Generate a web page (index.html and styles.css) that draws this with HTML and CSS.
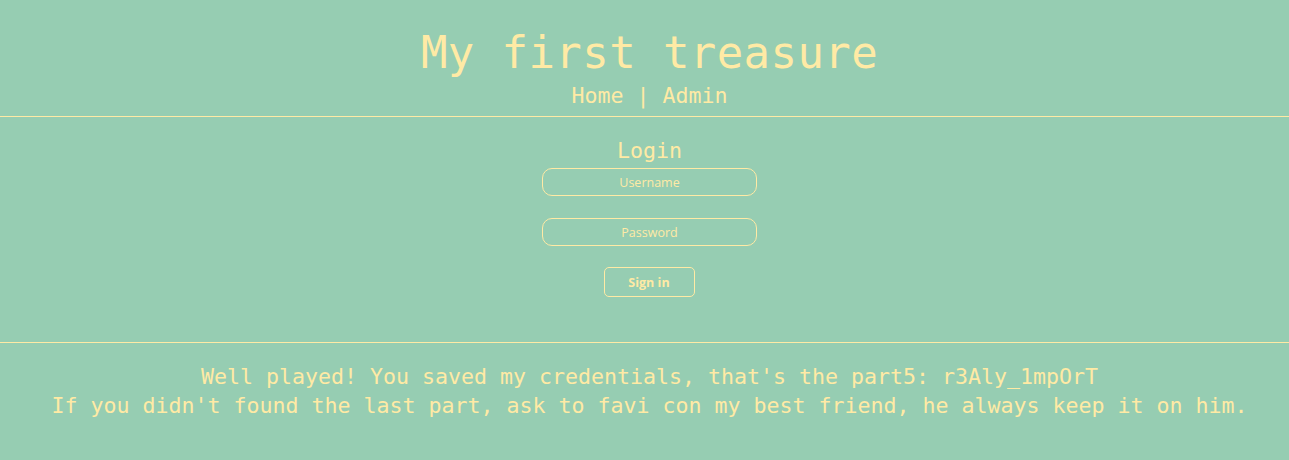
FILE: index.html
```html
<!DOCTYPE html>
<html lang="en">
<head>
<meta charset="utf-8">
<title>My first treasure</title>
<link rel="stylesheet" href="styles.css">
</head>
<body>
<header class="top">
  <h1 class="title">My first treasure</h1>
  <nav class="nav"><a href="#" class="nav-link">Home</a> | <a href="#" class="nav-link">Admin</a></nav>
</header>
<main class="login">
  <h2 class="login-title">Login</h2>
  <form class="login-form">
    <input class="field" type="text" placeholder="Username">
    <input class="field" type="password" placeholder="Password">
    <button class="btn" type="button">Sign in</button>
  </form>
</main>
<footer class="message">
  <p class="msg-line">Well played! You saved my credentials, that's the part5: r3Aly_1mpOrT</p>
  <p class="msg-line">If you didn't found the last part, ask to favi con my best friend, he always keep it on him.</p>
</footer>
</body>
</html>
```
FILE: styles.css
```css
html, body {
  margin: 0;
  padding: 0;
}
body {
  background: #96cdb2;
  color: #ffeaa5;
  font-family: "DejaVu Sans Mono", "Liberation Mono", monospace;
  height: 460px;
  overflow: hidden;
}
.top {
  padding: 27px 0 7px 10px;
  text-align: center;
  border-bottom: 1px solid #ffeaa5;
}
.title {
  margin: 0;
  font-size: 44px;
  line-height: 52px;
  font-weight: normal;
  letter-spacing: 0.4px;
}
.nav {
  margin-top: 4px;
  font-size: 21.6px;
  line-height: 26px;
}
.nav-link {
  color: #ffeaa5;
  text-decoration: none;
}
.login {
  padding: 21px 0 45px 10px;
  text-align: center;
  border-bottom: 1px solid #ffeaa5;
}
.login-title {
  margin: 0;
  font-size: 21.6px;
  line-height: 26px;
  font-weight: normal;
}
.login-form {
  margin-top: 4px;
  display: flex;
  flex-direction: column;
  align-items: center;
}
.field {
  box-sizing: border-box;
  width: 215px;
  height: 28px;
  margin: 0 0 22px 0;
  border: 1px solid #ffeaa5;
  border-radius: 10px;
  background: transparent;
  color: #ffeaa5;
  text-align: center;
  font-family: "Open Sans", "Noto Sans", sans-serif;
  font-size: 12.5px;
  padding: 0;
  outline: none;
}
.field::placeholder {
  color: #ffeaa5;
  opacity: 1;
}
.field + .field {
  margin-bottom: 21px;
}
.btn {
  box-sizing: border-box;
  width: 91px;
  height: 30px;
  margin-right: 1px;
  border: 1px solid #ffeaa5;
  border-radius: 5px;
  background: transparent;
  color: #ffeaa5;
  font-family: "Open Sans", "Noto Sans", sans-serif;
  font-weight: bold;
  font-size: 12.5px;
  padding: 0;
}
.message {
  padding: 19px 0 0 10px;
  text-align: center;
}
.msg-line {
  margin: 0;
  font-size: 21.6px;
  line-height: 29px;
}
```
